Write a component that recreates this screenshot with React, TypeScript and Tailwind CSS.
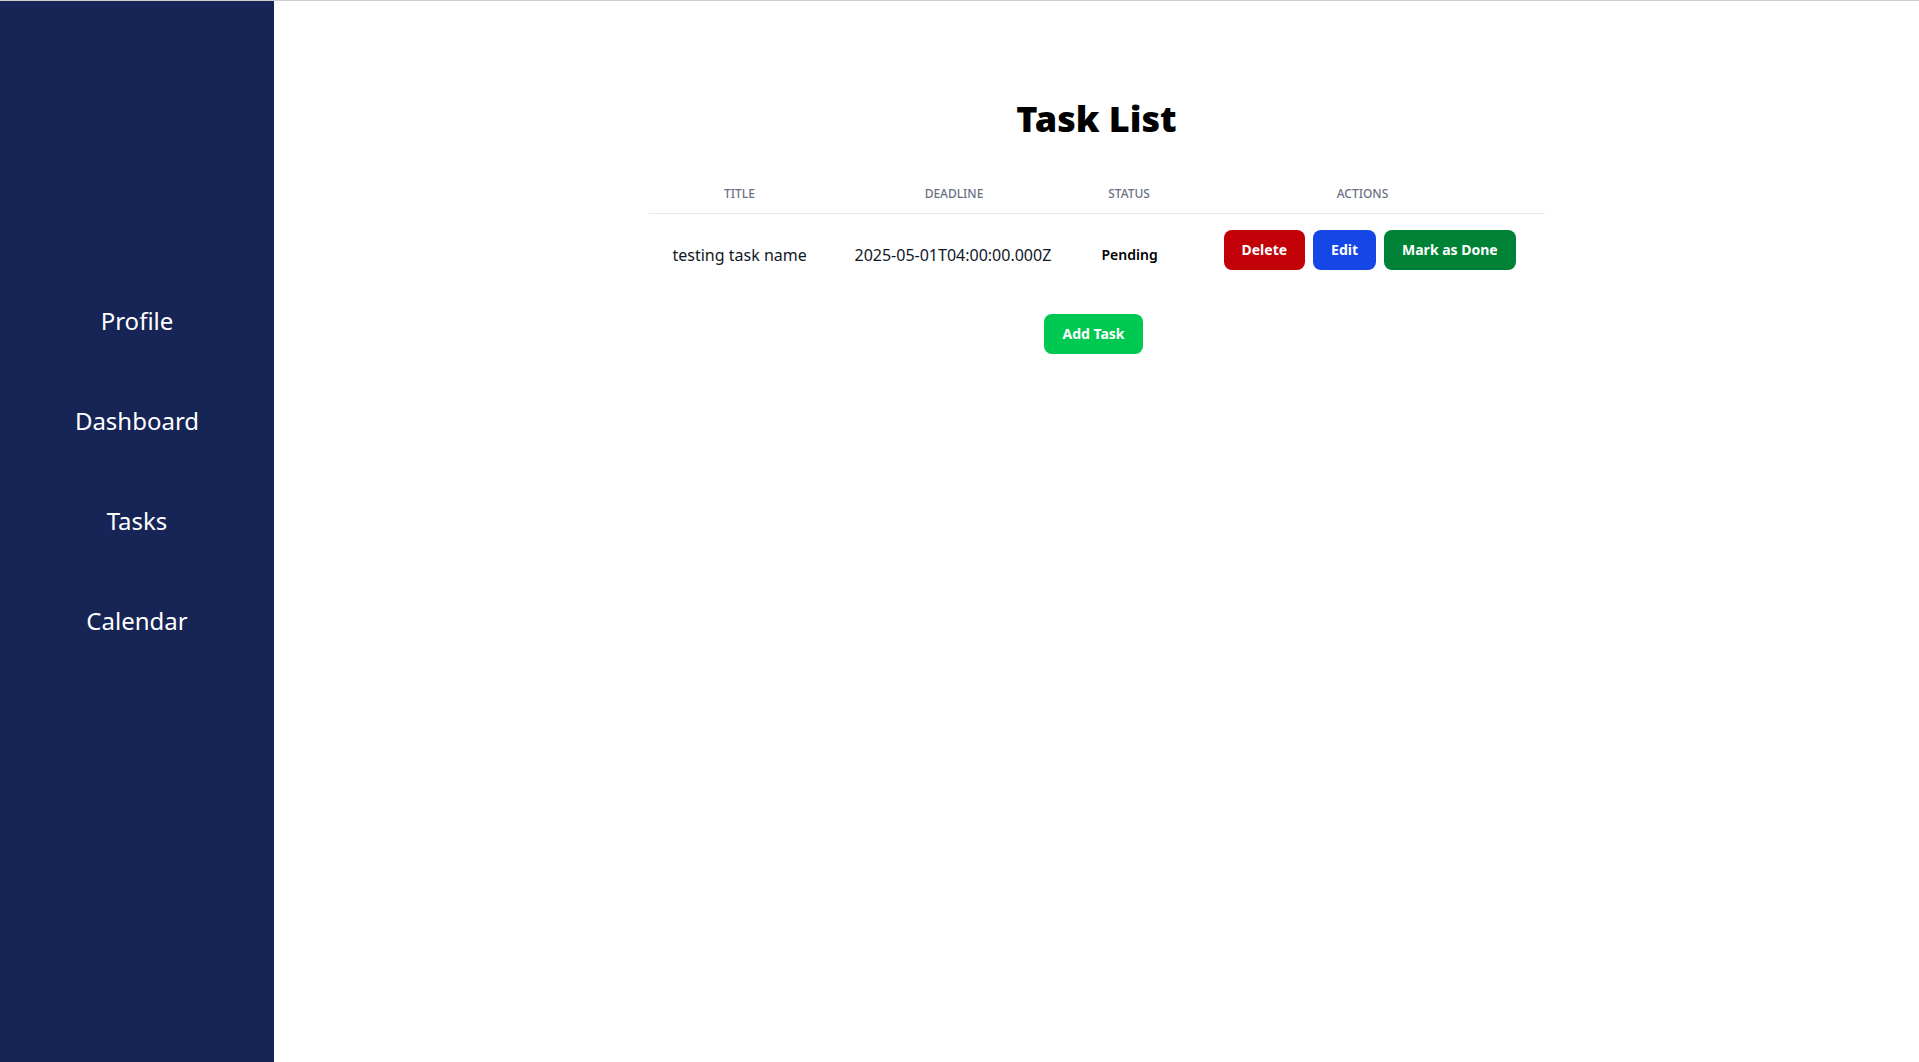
import React from "react";

const tasks = [
  {
    id: 1,
    title: "testing task name",
    deadline: "2025-05-01T04:00:00.000Z",
    status: "Pending",
  },
];

const links = ["Profile", "Dashboard", "Tasks", "Calendar"];

function Sidebar() {
  return (
    <aside className="w-[274px] shrink-0 bg-[#162456] flex flex-col items-center pt-[304px] gap-[68px]">
      {links.map((l) => (
        <a key={l} href="#" className="text-2xl text-white">
          {l}
        </a>
      ))}
    </aside>
  );
}

export default function App() {
  return (
    <div
      className="h-screen flex flex-col bg-white text-black"
      style={{ fontFamily: '"Noto Sans", "Open Sans", sans-serif' }}
    >
      <div className="h-px bg-[#cfcfcf]" />
      <div className="flex flex-1">
        <Sidebar />
        <main className="flex-1 flex flex-col items-center pt-[98px]">
          <h1 className="text-4xl font-black">Task List</h1>
          <table className="mt-[34px] w-[896px] table-fixed">
            <thead>
              <tr className="border-b border-gray-200">
                <th className="w-[182px] pt-[13px] pb-[11px] text-xs font-medium uppercase text-gray-500">Title</th>
                <th className="w-[247px] pt-[13px] pb-[11px] text-xs font-medium uppercase text-gray-500">Deadline</th>
                <th className="w-[103px] pt-[13px] pb-[11px] text-xs font-medium uppercase text-gray-500">Status</th>
                <th className="pt-[13px] pb-[11px] text-xs font-medium uppercase text-gray-500">Actions</th>
              </tr>
            </thead>
            <tbody>
              {tasks.map((t) => (
                <tr key={t.id}>
                  <td className="px-6 pt-[25px] pb-4 text-left text-gray-900 whitespace-nowrap">{t.title}</td>
                  <td className="px-6 pt-[25px] pb-4 text-left text-gray-900 whitespace-nowrap">{t.deadline}</td>
                  <td className="px-6 pt-[25px] pb-4 text-left text-sm font-semibold whitespace-nowrap">{t.status}</td>
                  <td className="py-4 pl-[43px]">
                    <div className="flex gap-2">
                      <button className="rounded-lg bg-red-700 px-[18px] py-2.5 text-sm font-bold text-white">
                        Delete
                      </button>
                      <button className="rounded-lg bg-blue-700 px-[18px] py-2.5 text-sm font-bold text-white">
                        Edit
                      </button>
                      <button className="rounded-lg bg-green-700 px-[18px] py-2.5 text-sm font-bold text-white">
                        Mark as Done
                      </button>
                    </div>
                  </td>
                </tr>
              ))}
            </tbody>
          </table>
          <button className="mt-7 mr-[6px] rounded-lg bg-green-500 px-[18px] py-2.5 text-sm font-bold text-white">
            Add Task
          </button>
        </main>
      </div>
    </div>
  );
}
